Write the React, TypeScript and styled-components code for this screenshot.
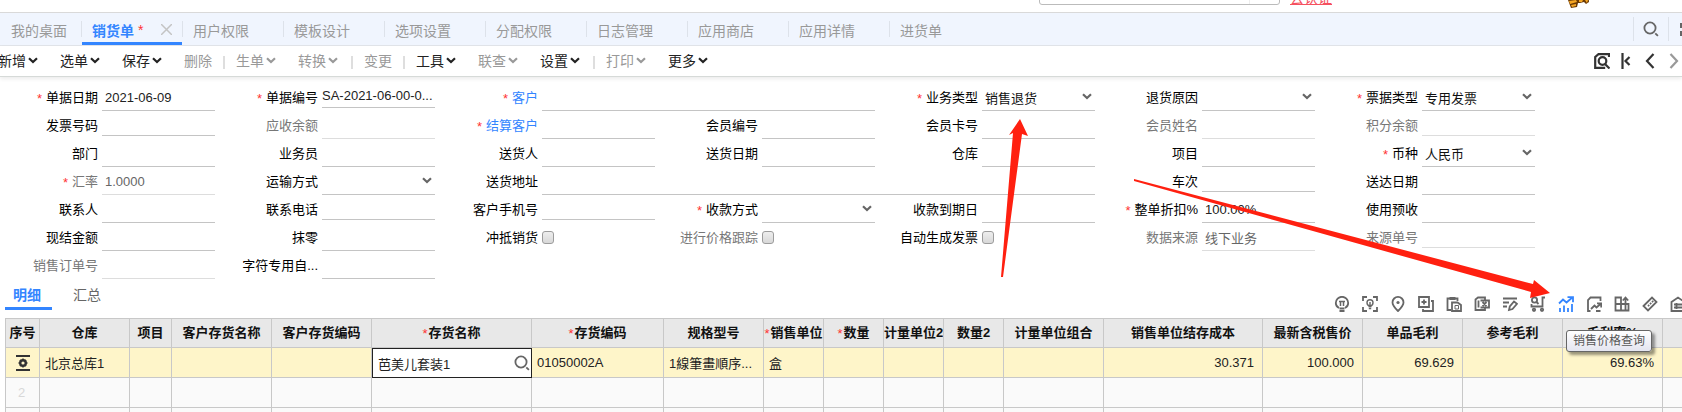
import React from "react";
import styled, { createGlobalStyle, css } from "styled-components";

const blue = "#3385ff";
const line = "#c8c8c8";

const Global = createGlobalStyle`
  * { box-sizing: border-box; }
  html, body { margin: 0; background: #fff; }
  body, button, input, select {
    font-family: "Liberation Sans", "Noto Sans CJK SC", sans-serif;
    font-size: 13px;
    color: #111;
  }
  button { border: 0; padding: 0; background: none; cursor: pointer; }
`;

const Page = styled.div`
  position: relative;
  height: 100vh;
  overflow: hidden;
`;

/* ---------- site header ---------- */

const SiteHeader = styled.header`
  display: flex;
  justify-content: flex-end;
  align-items: flex-end;
  height: 12px;
  overflow: hidden;
  padding: 0 93px 4px 0;
`;

const SearchBox = styled.div`
  display: flex;
  width: 241px;
  height: 30px;
  margin: 0 10px 3px 0;
  border: 1px solid #bbb;
  border-radius: 3px;
`;

const SearchInput = styled.input`
  flex: 1;
  min-width: 0;
  border: 0;
  outline: 0;
  background: transparent;
`;

const SearchGo = styled.button`
  width: 30px;
  border-left: 1px solid #eee;
`;

const CertLink = styled.a`
  margin: 0 236px 0 0;
  color: #f5515f;
  font-size: 14px;
  line-height: 20px;
`;

/* ---------- document tabs ---------- */

const TabBar = styled.nav`
  display: flex;
  align-items: center;
  height: 34px;
  background: #f0f5fe;
  border-top: 1px solid #d9d9d9;
  border-bottom: 1px solid #e2e5ea;
`;

const TabDivider = styled.span<{ $tall?: boolean }>`
  width: 1px;
  height: ${(p) => (p.$tall ? 24 : 16)}px;
  background: #dde2ea;
`;

const DocTab = styled.button<{ $active?: boolean; $first?: boolean }>`
  display: flex;
  align-items: center;
  width: ${(p) => (p.$first ? 81 : 100)}px;
  height: 32px;
  padding: 1px ${(p) => (p.$first ? 11 : 10)}px 0;
  font-size: 14px;
  color: #999;
  ${(p) =>
    p.$active &&
    css`
      color: ${blue};
      font-weight: bold;
      border-bottom: 3px solid ${blue};
      padding-top: 4px;
    `}
`;

const TabStar = styled.span`
  margin-left: 4px;
  color: #f33;
  font-weight: normal;
`;

const TabClose = styled.svg`
  margin-left: auto;
`;

const TabTools = styled.div`
  display: flex;
  align-items: center;
  gap: 9px;
  margin-left: auto;
  margin-right: -12px;
`;

const IconButton = styled.button<{ $color?: string }>`
  position: relative;
  display: flex;
  width: 16px;
  height: 16px;
  color: ${(p) => p.$color ?? "#666"};
`;

/* ---------- toolbar ---------- */

const Toolbar = styled.div`
  display: flex;
  align-items: center;
  height: 31px;
  border-bottom: 1px solid #d6dad8;
  box-shadow: 0 2px 4px rgba(0, 0, 0, 0.08);
`;

const Actions = styled.div`
  display: flex;
  align-items: center;
  margin-left: -12px;
`;

const Action = styled.button<{ $disabled?: boolean }>`
  display: flex;
  align-items: center;
  gap: 2px;
  padding: 0 10px;
  font-size: 14px;
  line-height: 28px;
  color: ${(p) => (p.$disabled ? "#999" : "#222")};
`;

const MenuMark = styled.span`
  display: flex;
  width: 12px;
  padding-bottom: 2px;
`;

const ActionDivider = styled.span`
  width: 2px;
  height: 13px;
  margin: 2px 1px 0;
  background: #dedede;
`;

const Pager = styled.div`
  display: flex;
  gap: 8px;
  margin-left: auto;
`;

/* ---------- form ---------- */

const Form = styled.form`
  display: grid;
  grid-template-columns: repeat(7, minmax(0, 220px));
  grid-auto-rows: 28px;
  padding-top: 7px;
`;

const Field = styled.div<{ $span?: number }>`
  grid-column: span ${(p) => p.$span ?? 1};
  display: flex;
  gap: 4px;
  padding-right: 5px;
`;

const Label = styled.label<{ $tone?: string }>`
  display: flex;
  justify-content: flex-end;
  width: 98px;
  flex: none;
  line-height: 28px;
  white-space: nowrap;
  color: ${(p) => (p.$tone === "link" ? blue : p.$tone === "muted" ? "#777" : "#000")};
`;

const Required = styled.span<{ $gap?: number }>`
  margin-right: ${(p) => p.$gap ?? 4}px;
  padding-top: 1px;
  color: #f33;
  font-weight: normal;
`;

const FieldBox = styled.div<{ $short?: boolean; $muted?: boolean }>`
  display: flex;
  flex: 1;
  min-width: 0;
  align-items: center;
  height: ${(p) => (p.$short ? 24 : 27)}px;
  border-bottom: 1px solid ${(p) => (p.$muted ? "#ddd" : "#c4c4c4")};
`;

const TextInput = styled.input<{ $muted?: boolean; $flush?: boolean }>`
  width: 100%;
  height: 24px;
  padding: 0 0 0 ${(p) => (p.$flush ? 0 : 3)}px;
  border: 0;
  outline: 0;
  background: transparent;
  color: ${(p) => (p.$muted ? "#666" : "#222")};
`;

const Select = styled.select`
  flex: 1;
  min-width: 0;
  height: 26px;
  padding: 2px 0 0 3px;
  border: 0;
  outline: 0;
  appearance: none;
  background: transparent;
`;

const SelectArrow = styled.span`
  display: flex;
  margin: 0 3px 1px 0;
  color: #666;
`;

const Check = styled.input`
  appearance: none;
  width: 12px;
  height: 13px;
  margin: 7px 0 0;
  border: 1px solid #9c9c9c;
  border-radius: 3px;
  background: linear-gradient(#eee, #d8d8d8);
`;

/* ---------- detail section ---------- */

const SectionBar = styled.div`
  display: flex;
  align-items: flex-start;
  height: 30px;
  margin: 0 -4px 8px 5px;
`;

const SectionTab = styled.button<{ $active?: boolean }>`
  width: 47px;
  height: 30px;
  margin-right: 13px;
  padding-right: 3px;
  font-size: 14px;
  color: ${(p) => (p.$active ? blue : "#666")};
  font-weight: ${(p) => (p.$active ? "bold" : "normal")};
  border-bottom: 3px solid ${(p) => (p.$active ? blue : "transparent")};
`;

const SectionTools = styled.div`
  display: flex;
  gap: 12px;
  margin: 16px 0 0 auto;
`;

const Tooltip = styled.span`
  position: absolute;
  z-index: 2;
  left: 8px;
  top: 34px;
  padding: 0 6px;
  font-size: 12px;
  line-height: 20px;
  white-space: nowrap;
  color: #575757;
  border: 1px solid #666;
  border-radius: 3px;
  background: linear-gradient(#fff, #e4e5f0);
  box-shadow: 3px 3px 3px rgba(0, 0, 0, 0.4);
`;

const TableWrap = styled.div`
  padding-left: 5px;
  overflow: hidden;
`;

const Table = styled.table`
  table-layout: fixed;
  width: 1758px;
  border-collapse: separate;
  border-spacing: 0;
  border: solid ${line};
  border-width: 1px 0 0 1px;
`;

const Th = styled.th`
  height: 29px;
  padding: 0;
  overflow: hidden;
  white-space: nowrap;
  line-height: 20px;
  color: #111;
  background: #e8e8e8;
  border: solid ${line};
  border-width: 0 1px 1px 0;
`;

const HeadText = styled.span`
  display: flex;
  justify-content: center;
`;

const Row = styled.tr<{ $selected?: boolean }>`
  background: ${(p) => (p.$selected ? "#fef5c9" : "#fafafa")};
`;

const Td = styled.td<{ $align?: string; $flush?: boolean; $pale?: boolean }>`
  height: 30px;
  padding: ${(p) => (p.$flush ? "0" : p.$pale ? "0 2px 0 0" : "0 8px 0 5px")};
  overflow: ${(p) => (p.$flush ? "visible" : "hidden")};
  white-space: nowrap;
  text-align: ${(p) => p.$align ?? "left"};
  color: ${(p) => (p.$pale ? "#d8d8d8" : "#222")};
  border: solid ${line};
  border-width: 0 1px 1px 0;
`;

const CellEditor = styled.div`
  display: flex;
  align-items: center;
  height: 30px;
  margin: 0 -1px -1px 0;
  padding: 0 1px 0 2px;
  position: relative;
  background: #fff;
  border: 1px solid #222;
`;

const RowSettings = styled.button`
  display: flex;
  margin: 0 auto;
  color: #333;
`;

const Annotation = styled.svg`
  position: absolute;
  left: 0;
  top: 0;
  z-index: 3;
  pointer-events: none;
`;

/* ---------- icons ---------- */

const Svg = ({ children, w = 1.8, size = 16 }: { children: React.ReactNode; w?: number; size?: number }) => (
  <svg width={size} height={size} viewBox="0 0 16 16" fill="none" stroke="currentColor" strokeWidth={w}>
    {children}
  </svg>
);

const Chevron = () => (
  <svg width="10" height="7" viewBox="0 0 10 7" fill="none" stroke="currentColor" strokeWidth="2.2">
    <path d="M1 1.200l4 3.800L9 1.200" />
  </svg>
);

const SearchIcon = () => (
  <Svg w={1.8}>
    <circle cx="7" cy="7" r="5.6" />
    <path d="M12.300 12.300l2.600 2.600" />
  </Svg>
);

const FullscreenIcon = () => (
  <Svg w={2}>
    <path d="M7 3H3v4M3 10v4h4M10 3h4v4M14 10v4h-4" />
  </Svg>
);

const PreviewIcon = () => (
  <Svg w={2.2}>
    <path d="M15 4V1.200H4.500L1.200 4v10.800h10" />
    <circle cx="8.5" cy="8" r="3.800" />
    <path d="M11 11l4.500 4.500" />
  </Svg>
);

const FirstIcon = () => (
  <Svg w={2.2}>
    <path d="M4.500 0v16M11.500 4L7.500 8l4 4" />
  </Svg>
);

const PrevIcon = () => (
  <Svg w={2.200}>
    <path d="M11.500 1L5 8l6.500 7" />
  </Svg>
);

const NextIcon = () => (
  <Svg w={2.200}>
    <path d="M4.500 1L11 8l-6.500 7" />
  </Svg>
);

const sectionIcons: { name: string; icon: React.ReactNode; tip?: string }[] = [
  {
    name: "提示",
    icon: (
      <Svg>
        <path d="M5 12C3 11 1.800 9.300 1.800 7a6.200 6.200 0 0 1 12.400 0c0 2.300-1.200 4-3.200 5M5.500 12.500h5M5.500 15h5" />
        <path d="M5 5.500h6M6.500 5.500v4.500M9.500 5.500v4.500" strokeWidth="1.500" />
      </Svg>
    ),
  },
  {
    name: "智能识别",
    icon: (
      <Svg>
        <path d="M1 5V1h4M11 1h4v4M1 11v4h4M11 15h4v-4" />
        <circle cx="8" cy="6.800" r="3" strokeWidth="1.400" />
        <path d="M6.500 10.500h3M6.800 12.500h2.400M8 6v4" strokeWidth="1.400" />
      </Svg>
    ),
  },
  {
    name: "定位",
    icon: (
      <Svg>
        <path d="M8 15C4.500 11.500 2.500 9 2.500 6.400a5.500 5.500 0 0 1 11 0C13.500 9 11.500 11.500 8 15z" />
        <circle cx="8" cy="6.500" r="1.600" fill="currentColor" stroke="none" />
      </Svg>
    ),
  },
  {
    name: "复制行",
    icon: (
      <Svg>
        <path d="M1 1h10v10H1zM13 5h2v10H5v-2M6 3.500v5M3.500 6h5" />
      </Svg>
    ),
  },
  {
    name: "粘贴行",
    icon: (
      <Svg>
        <path d="M5 14H1.500V2.500h10V5" />
        <path d="M3.500 2.500h6" strokeWidth="3" />
        <path d="M6 6.500h5.500L15 9v6H6z" />
        <path d="M9 9.500h3.500v3.500H9z" strokeWidth="1" />
      </Svg>
    ),
  },
  {
    name: "导出",
    icon: (
      <Svg>
        <path d="M11 4V1.500H4L1.500 3.500V14H11V12M4.500 4.500v7" />
        <path d="M6.500 4.500h8.500v7H6.500M8.500 6l4 4M12.500 6l-4 4" />
      </Svg>
    ),
  },
  {
    name: "批改",
    icon: (
      <Svg>
        <path d="M1 2.500h14M1 6.500h6M1 10.500h4M7 14l.8-3.500L12 5.500l3 2.300-4.500 5.200z" />
      </Svg>
    ),
  },
  {
    name: "选购",
    icon: (
      <Svg>
        <circle cx="4.500" cy="4" r="2.600" />
        <path d="M6.500 6l2 2M15 1.500h-2.500V10.500H1.500V8" />
        <circle cx="4" cy="13.800" r="1.200" />
        <circle cx="12" cy="13.800" r="1.200" />
      </Svg>
    ),
  },
  {
    name: "销售价格查询",
    tip: "销售价格查询",
    icon: (
      <Svg>
        <path d="M2 16v-4M6 16V9.500M10 16v-4M14 16V8" />
        <path d="M1 7.500L5 3.500l3.500 3L14 1.800M9.500 1.200H15v5" />
      </Svg>
    ),
  },
  {
    name: "价格走势",
    icon: (
      <Svg>
        <path d="M14.500 5V1.500H4.500L2 4v11h2.500M10 15h4.500" />
        <path d="M5 13l3.500-3.500 2 2L15 7.500M11 7.300H15.200V11.500" />
      </Svg>
    ),
  },
  {
    name: "列设置",
    icon: (
      <Svg>
        <path d="M7 8H1.500V1.500H7V14.500H1.500V8H14.500v6.500H7M11.500 14V2M8.800 4.500l2.700-3 2.700 3" />
      </Svg>
    ),
  },
  {
    name: "标尺",
    icon: (
      <Svg>
        <path d="M1.500 10L10 1.500l4.500 4.500L6 14.500zM6 9l1.200 1.200M8 7l1.200 1.200M10 5l1.200 1.200" />
      </Svg>
    ),
  },
  {
    name: "仓库",
    icon: (
      <Svg>
        <path d="M1.500 15V6L8 1.500 14.500 6v9zM4 8.500h8M4 11.500h8M6.500 7v6" />
      </Svg>
    ),
  },
];

/* ---------- data ---------- */

const docTabs = ["用户权限", "模板设计", "选项设置", "分配权限", "日志管理", "应用商店", "应用详情", "进货单"];

const actions: { text: string; menu?: boolean; off?: boolean; bar?: boolean }[] = [
  { text: "新增", menu: true },
  { text: "选单", menu: true },
  { text: "保存", menu: true },
  { text: "删除", off: true, bar: true },
  { text: "生单", menu: true, off: true },
  { text: "转换", menu: true, off: true, bar: true },
  { text: "变更", off: true, bar: true },
  { text: "工具", menu: true },
  { text: "联查", menu: true, off: true },
  { text: "设置", menu: true, bar: true },
  { text: "打印", menu: true, off: true },
  { text: "更多", menu: true },
];

type FieldDef = {
  label: string;
  value?: string;
  kind?: "select" | "check";
  req?: boolean;
  tone?: "link" | "muted";
  span?: number;
  short?: boolean;
  flush?: boolean;
};

const fields: FieldDef[] = [
  { label: "单据日期", value: "2021-06-09", req: true },
  { label: "单据编号", value: "SA-2021-06-00-0...", req: true, short: true, flush: true },
  { label: "客户", req: true, tone: "link", span: 2 },
  { label: "业务类型", value: "销售退货", kind: "select", req: true },
  { label: "退货原因", kind: "select" },
  { label: "票据类型", value: "专用发票", kind: "select", req: true },

  { label: "发票号码", short: true },
  { label: "应收余额", tone: "muted" },
  { label: "结算客户", req: true, tone: "link" },
  { label: "会员编号" },
  { label: "会员卡号" },
  { label: "会员姓名", tone: "muted" },
  { label: "积分余额", tone: "muted", short: true },

  { label: "部门" },
  { label: "业务员" },
  { label: "送货人" },
  { label: "送货日期" },
  { label: "仓库" },
  { label: "项目" },
  { label: "币种", value: "人民币", kind: "select", req: true },

  { label: "汇率", value: "1.0000", req: true, tone: "muted" },
  { label: "运输方式", kind: "select" },
  { label: "送货地址", span: 3 },
  { label: "车次", short: true },
  { label: "送达日期" },

  { label: "联系人" },
  { label: "联系电话", short: true },
  { label: "客户手机号", short: true },
  { label: "收款方式", kind: "select", req: true },
  { label: "收款到期日" },
  { label: "整单折扣%", value: "100.00%", req: true },
  { label: "使用预收" },

  { label: "现结金额" },
  { label: "抹零" },
  { label: "冲抵销货", kind: "check" },
  { label: "进行价格跟踪", kind: "check", tone: "muted" },
  { label: "自动生成发票", kind: "check" },
  { label: "数据来源", value: "线下业务", tone: "muted" },
  { label: "来源单号", tone: "muted", short: true },

  { label: "销售订单号", tone: "muted" },
  { label: "字符专用自..." },
];

type Column = { title: string; width: number; req?: boolean; value?: string; num?: boolean };

const columns: Column[] = [
  { title: "仓库", width: 90, value: "北京总库1" },
  { title: "项目", width: 42 },
  { title: "客户存货名称", width: 100 },
  { title: "客户存货编码", width: 100 },
  { title: "存货名称", width: 160, req: true, value: "芭美儿套装1" },
  { title: "存货编码", width: 132, req: true, value: "01050002A" },
  { title: "规格型号", width: 100, value: "1線筆畫順序..." },
  { title: "销售单位", width: 60, req: true, value: "盒" },
  { title: "数量", width: 60, req: true },
  { title: "计量单位2", width: 60 },
  { title: "数量2", width: 60 },
  { title: "计量单位组合", width: 100 },
  { title: "销售单位结存成本", width: 159, value: "30.371", num: true },
  { title: "最新含税售价", width: 100, value: "100.000", num: true },
  { title: "单品毛利", width: 100, value: "69.629", num: true },
  { title: "参考毛利", width: 100 },
  { title: "毛利率%", width: 100, value: "69.63%", num: true },
  { title: "", width: 100 },
];

/* ---------- parts ---------- */

const FormField = ({ def, id }: { def: FieldDef; id: string }) => {
  const muted = def.tone === "muted";
  return (
    <Field $span={def.span}>
      <Label htmlFor={id} $tone={def.tone}>
        {def.req && <Required>*</Required>}
        {def.label}
      </Label>
      {def.kind === "check" ? (
        <Check type="checkbox" id={id} />
      ) : (
        <FieldBox $short={def.short} $muted={muted}>
          {def.kind === "select" ? (
            <>
              <Select id={id} defaultValue={def.value ?? ""}>
                <option>{def.value ?? ""}</option>
              </Select>
              <SelectArrow>
                <Chevron />
              </SelectArrow>
            </>
          ) : (
            <TextInput id={id} defaultValue={def.value} $muted={muted} $flush={def.flush} />
          )}
        </FieldBox>
      )}
    </Field>
  );
};

const EmptyRow = ({ index }: { index: number }) => (
  <Row>
    <Td $align="center" $pale>
      {index}
    </Td>
    {columns.map((c, i) => (
      <Td key={i} />
    ))}
  </Row>
);

export default function App() {
  return (
    <Page>
      <Global />
      <SiteHeader>
        <SearchBox>
          <SearchInput aria-label="搜索" />
          <SearchGo aria-label="搜索" />
        </SearchBox>
        <CertLink href="#cert">云认证</CertLink>
        <svg width="21" height="20" viewBox="0 0 21 20">
          <path d="M0 0h20l1 14-3 2-2-2-4 1-2 0-1 4-6 1-3-8z" fill="#6b3a05" />
          <path d="M1 13l7-1 1 2-7 2zM3 17l5-1v2l-4 1zM11 12h4l-1 2h-3zM17 12h3l-1 3z" fill="#f5a623" />
        </svg>
      </SiteHeader>

      <TabBar>
        <DocTab $first>我的桌面</DocTab>
        <TabDivider />
        <DocTab $active>
          销货单<TabStar>*</TabStar>
          <TabClose width="11" height="11" viewBox="0 0 11 11" stroke="#c4c4c4" strokeWidth="1.5">
            <path d="M0 0l11 11M11 0L0 11" />
          </TabClose>
        </DocTab>
        {docTabs.map((t) => (
          <React.Fragment key={t}>
            <TabDivider />
            <DocTab>{t}</DocTab>
          </React.Fragment>
        ))}
        <TabTools>
          <TabDivider $tall />
          <IconButton aria-label="查找">
            <SearchIcon />
          </IconButton>
          <TabDivider $tall />
          <IconButton aria-label="全屏">
            <FullscreenIcon />
          </IconButton>
        </TabTools>
      </TabBar>

      <Toolbar>
        <Actions>
          {actions.map((a) => (
            <React.Fragment key={a.text}>
              <Action $disabled={a.off}>
                {a.text}
                {a.menu && (
                  <MenuMark>
                    <Chevron />
                  </MenuMark>
                )}
              </Action>
              {a.bar && <ActionDivider />}
            </React.Fragment>
          ))}
        </Actions>
        <Pager>
          <IconButton $color="#333" aria-label="预览">
            <PreviewIcon />
          </IconButton>
          <IconButton $color="#333" aria-label="首张">
            <FirstIcon />
          </IconButton>
          <IconButton $color="#333" aria-label="上一张">
            <PrevIcon />
          </IconButton>
          <IconButton $color="#999" aria-label="下一张">
            <NextIcon />
          </IconButton>
        </Pager>
      </Toolbar>

      <Form>
        {fields.map((f, i) => (
          <FormField key={f.label} def={f} id={`field-${i}`} />
        ))}
      </Form>

      <SectionBar>
        <SectionTab $active>明细</SectionTab>
        <SectionTab>汇总</SectionTab>
        <SectionTools>
          {sectionIcons.map((s) => (
            <IconButton key={s.name} aria-label={s.name} $color={s.tip ? blue : "#666"}>
              {s.icon}
              {s.tip && <Tooltip role="tooltip">{s.tip}</Tooltip>}
            </IconButton>
          ))}
        </SectionTools>
      </SectionBar>

      <TableWrap>
        <Table>
          <colgroup>
            <col width={34} />
            {columns.map((c, i) => (
              <col key={i} width={c.width} />
            ))}
          </colgroup>
          <thead>
            <tr>
              <Th>序号</Th>
              {columns.map((c, i) => (
                <Th key={i}>
                  <HeadText>
                    {c.req && <Required $gap={1}>*</Required>}
                    {c.title}
                  </HeadText>
                </Th>
              ))}
            </tr>
          </thead>
          <tbody>
            <Row $selected>
              <Td $flush>
                <RowSettings aria-label="行设置">
                  <Svg w={2}>
                    <path d="M1 1h14M1 15h14" />
                    <circle cx="8" cy="8" r="2.800" strokeWidth="2.400" />
                    <path d="M3.500 8h2M10.500 8h2M8 3.500v2M8 10.500v2M5 5l1 1M11 5l-1 1M5 11l1-1M11 11l-1-1" strokeWidth="1.500" />
                  </Svg>
                </RowSettings>
              </Td>
              {columns.map((c, i) =>
                c.title === "存货名称" ? (
                  <Td key={i} $flush>
                    <CellEditor>
                      <TextInput aria-label={c.title} defaultValue={c.value} />
                      <IconButton aria-label="选择存货">
                        <SearchIcon />
                      </IconButton>
                    </CellEditor>
                  </Td>
                ) : (
                  <Td key={i} $align={c.num ? "right" : "left"}>
                    {c.value}
                  </Td>
                )
              )}
            </Row>
            <EmptyRow index={2} />
            <EmptyRow index={3} />
          </tbody>
        </Table>
      </TableWrap>

      <Annotation width="1682" height="412" viewBox="0 0 1682 412" fill="#ff2010" aria-hidden="true">
        <path d="M1020 119L1028 136L1022 134L1003 277H1001L1013 133L1009 135Z" />
        <path d="M1134 179L1533 284L1534 280L1550 293L1530 298L1531 292L1134 181Z" />
      </Annotation>
    </Page>
  );
}
